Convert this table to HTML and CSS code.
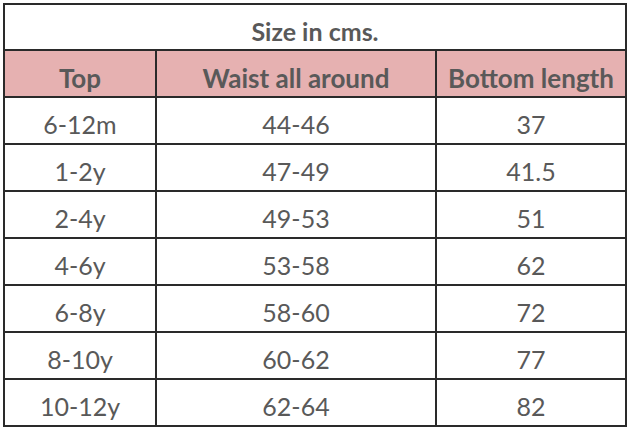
FILE: index.html
```html
<!DOCTYPE html>
<html>
<head>
<meta charset="utf-8">
<link rel="stylesheet" href="styles.css">
</head>
<body>
<table class="size-table">
  <colgroup>
    <col class="c1"><col class="c2"><col class="c3">
  </colgroup>
  <tr class="title-row"><td colspan="3">Size in cms.</td></tr>
  <tr class="head-row"><td>Top</td><td>Waist all around</td><td>Bottom length</td></tr>
  <tr><td>6-12m</td><td>44-46</td><td>37</td></tr>
  <tr><td>1-2y</td><td>47-49</td><td>41.5</td></tr>
  <tr><td>2-4y</td><td>49-53</td><td>51</td></tr>
  <tr><td>4-6y</td><td>53-58</td><td>62</td></tr>
  <tr><td>6-8y</td><td>58-60</td><td>72</td></tr>
  <tr><td>8-10y</td><td>60-62</td><td>77</td></tr>
  <tr><td>10-12y</td><td>62-64</td><td>82</td></tr>
</table>
</body>
</html>
```
FILE: styles.css
```css
html, body {
  margin: 0;
  padding: 0;
  background: #ffffff;
}
body {
  padding: 3px 0 0 3px;
  font-family: Lato, "Open Sans", sans-serif;
  color: #595959;
}
.size-table {
  border-collapse: collapse;
  width: 622px;
  table-layout: fixed;
}
.c1 { width: 152px; }
.c2 { width: 280px; }
.c3 { width: 190px; }
.size-table td {
  border: 2px solid #2a2a2a;
  height: 47px;
  padding: 8px 0 0 0;
  text-align: center;
  vertical-align: middle;
  font-size: 25px;
  line-height: 1;
  box-sizing: border-box;
}
.title-row td {
  font-weight: bold;
  font-size: 25px;
  height: 46px;
}
.head-row td {
  background: #e6b1b1;
  font-weight: bold;
  font-size: 26px;
}
```
